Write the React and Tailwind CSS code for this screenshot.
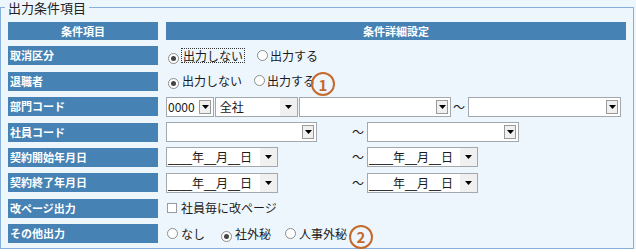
import React from "react";

function Radio({ checked }) {
    return (
        <span className="inline-flex h-[11px] w-[11px] shrink-0 items-center justify-center rounded-full border border-[#8c8c8c] bg-white">
            {checked && <span className="h-[5px] w-[5px] rounded-full bg-[#444]" />}
        </span>
    );
}

function Arrow() {
    return (
        <svg width="7" height="4" viewBox="0 0 7 4">
            <path d="M0 0h7L3.5 4z" fill="#000" />
        </svg>
    );
}

function Select({ className, children, flat }) {
    return (
        <div className={`flex h-[20px] shrink-0 items-stretch border border-[#a3a8ae] bg-white ${className}`}>
            <span className="flex-1 overflow-hidden whitespace-pre pl-[1px] leading-[18px]">{children}</span>
            {flat ? (
                <span className="flex w-[17px] items-center justify-center bg-[#f0f0f0]">
                    <Arrow />
                </span>
            ) : (
                <span className="my-[2px] mr-[2px] flex w-[12px] items-center justify-center border border-[#9a9a9a] bg-[#f0f0f0]">
                    <Arrow />
                </span>
            )}
        </div>
    );
}

function DateText() {
    const u = "font-['DejaVu_Sans',sans-serif]";
    return (
        <>
            <span className={u}>____</span>年<span className={u}>__</span>月<span className={u}>__</span>日
        </>
    );
}

function Circled({ n }) {
    return (
        <span className="inline-flex h-[24px] w-[24px] shrink-0 items-center justify-center rounded-full border-2 border-[#c5692c] text-[15px] font-bold leading-none text-[#c5692c]">
            {n}
        </span>
    );
}

function Tilde({ className }) {
    return <span className={`shrink-0 text-[12px] ${className}`}>～</span>;
}

function Label({ children }) {
    return (
        <div className="h-[19px] bg-[#4682b4] pl-[2px] text-[11px] font-bold leading-[19px] text-white">
            {children}
        </div>
    );
}

function Cell({ children }) {
    return <div className="flex h-[19px] items-center">{children}</div>;
}

export default function App() {
    return (
        <div className="h-[252px] w-[636px] bg-white font-['Noto_Sans_CJK_JP','Noto_Sans',sans-serif] text-[12px] text-[#1a1a1a]">
            <div className="h-[249px] overflow-hidden bg-[#eef6fd]">
                <fieldset className="m-0 h-[249px] w-[634px] border border-[#86b0dc] pl-[7px] pr-0 pt-[7px] pb-0">
                    <legend className="-ml-[3px] px-[3px] text-[13px] leading-[15px] text-[#222]">
                        出力条件項目
                    </legend>
                    <div className="grid grid-cols-[150px_460px] gap-x-[8px] gap-y-[6.4px]">
                        <div className="h-[18px] bg-[#4682b4] text-center text-[11px] font-bold leading-[18px] text-white">
                            条件項目
                        </div>
                        <div className="h-[18px] bg-[#4682b4] text-center text-[11px] font-bold leading-[18px] text-white">
                            条件詳細設定
                        </div>

                        <Label>取消区分</Label>
                        <Cell>
                            <span className="ml-[2px]"><Radio checked /></span>
                            <span className="ml-[2px] border border-dotted border-[#333] px-[1px] leading-[13px]">出力しない</span>
                            <span className="ml-[12px]"><Radio /></span>
                            <span className="ml-[2px]">出力する</span>
                        </Cell>

                        <Label>退職者</Label>
                        <Cell>
                            <span className="ml-[2px]"><Radio checked /></span>
                            <span className="ml-[3px]">出力しない</span>
                            <span className="ml-[12px]"><Radio /></span>
                            <span className="ml-[2px]">出力する</span>
                            <span className="-ml-[4px] mt-[6px]"><Circled n="1" /></span>
                        </Cell>

                        <Label>部門コード</Label>
                        <Cell>
                            <Select className="w-[48px]">0000</Select>
                            <Select className="ml-[1px] w-[83px]" flat> 全社</Select>
                            <Select className="ml-[1px] w-[152px]" />
                            <Tilde className="ml-[2px]" />
                            <Select className="ml-[3px] w-[153px]" />
                        </Cell>

                        <Label>社員コード</Label>
                        <Cell>
                            <Select className="w-[151px]" />
                            <Tilde className="ml-[35px]" />
                            <Select className="ml-[3px] w-[152px]" />
                        </Cell>

                        <Label>契約開始年月日</Label>
                        <Cell>
                            <Select className="w-[112px]" flat><DateText /></Select>
                            <Tilde className="ml-[74px]" />
                            <Select className="ml-[3px] w-[111px]" flat><DateText /></Select>
                        </Cell>

                        <Label>契約終了年月日</Label>
                        <Cell>
                            <Select className="w-[112px]" flat><DateText /></Select>
                            <Tilde className="ml-[74px]" />
                            <Select className="ml-[3px] w-[111px]" flat><DateText /></Select>
                        </Cell>

                        <Label>改ページ出力</Label>
                        <Cell>
                            <span className="ml-[1px] h-[10px] w-[10px] shrink-0 border border-[#9a9a9a] bg-white" />
                            <span className="ml-[4px]">社員毎に改ページ</span>
                        </Cell>

                        <Label>その他出力</Label>
                        <Cell>
                            <span className="ml-[1px]"><Radio /></span>
                            <span className="ml-[3px]">なし</span>
                            <span className="ml-[16px]"><Radio checked /></span>
                            <span className="ml-[3px]">社外秘</span>
                            <span className="ml-[14px]"><Radio /></span>
                            <span className="ml-[3px]">人事外秘</span>
                            <span className="ml-[2px] mt-[6px]"><Circled n="2" /></span>
                        </Cell>
                    </div>
                </fieldset>
            </div>
        </div>
    );
}
